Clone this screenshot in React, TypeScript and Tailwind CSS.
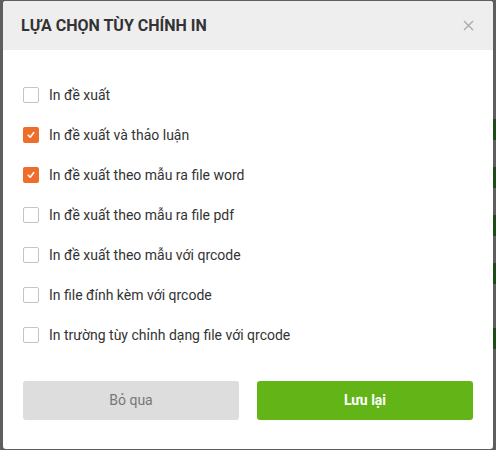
import { useState } from 'react'

const options = [
  { id: 'de-xuat', label: 'In đề xuất', checked: false },
  { id: 'thao-luan', label: 'In đề xuất và thảo luận', checked: true },
  { id: 'word', label: 'In đề xuất theo mẫu ra file word', checked: true },
  { id: 'pdf', label: 'In đề xuất theo mẫu ra file pdf', checked: false },
  { id: 'qrcode', label: 'In đề xuất theo mẫu với qrcode', checked: false },
  { id: 'dinh-kem', label: 'In file đính kèm với qrcode', checked: false },
  { id: 'tuy-chinh', label: 'In trường tùy chỉnh dạng file với qrcode', checked: false },
]

function CheckBox({ checked }: { checked: boolean }) {
  if (checked) {
    return (
      <span className="w-4 h-4 rounded-[2px] bg-[#ee6d2a] flex items-center justify-center shrink-0">
        <svg width="10" height="10" viewBox="0 0 10 10" fill="none">
          <path d="M2.2 5.2 L4.2 7.2 L7.8 2.6" stroke="#fff" strokeWidth="1.6" strokeLinecap="round" strokeLinejoin="round" />
        </svg>
      </span>
    )
  }
  return <span className="w-4 h-4 rounded-[2px] border border-[#c4c4c4] bg-white shrink-0" />
}

export default function App() {
  const [items, setItems] = useState(options)

  const toggle = (id: string) =>
    setItems(items.map((it) => (it.id === id ? { ...it, checked: !it.checked } : it)))

  return (
    <div className="w-[496px] h-[450px] bg-[#5e5e5e] flex overflow-hidden font-['Roboto',sans-serif]">
      <div className="w-[3px] shrink-0" />
      <div className="w-[490px] mt-[1px] h-[448px] bg-white rounded-[3px] overflow-hidden flex flex-col shrink-0">
        <div className="h-[49px] bg-[#eeeeee] flex items-center justify-between pl-[18px] pr-[19px]">
          <h2 className="text-[16px] font-bold text-[#333333] tracking-[0px]">LỰA CHỌN TÙY CHÍNH IN</h2>
          <button className="text-[#aaaaaa]">
            <svg width="11" height="11" viewBox="0 0 11 11">
              <path d="M1 1 L10 10 M10 1 L1 10" stroke="#aaaaaa" strokeWidth="1.4" />
            </svg>
          </button>
        </div>
        <div className="pt-[25px] px-[20px] flex flex-col">
          {items.map((it) => (
            <label
              key={it.id}
              onClick={() => toggle(it.id)}
              className="h-[40px] flex items-center gap-[10px] cursor-pointer"
            >
              <CheckBox checked={it.checked} />
              <span className="text-[14px] text-[#333333]">{it.label}</span>
            </label>
          ))}
        </div>
        <div className="px-[20px] mt-[26px] flex gap-[18px]">
          <button className="flex-1 h-[39px] rounded-[3px] bg-[#dddddd] text-[#777777] text-[14px]">
            Bỏ qua
          </button>
          <button className="flex-1 h-[39px] rounded-[3px] bg-[#63b517] text-white text-[14px] font-bold">
            Lưu lại
          </button>
        </div>
      </div>
      <div className="w-[3px] shrink-0 flex flex-col pt-[119px] gap-[27px]">
        <div className="h-[21px] bg-[#1f4a1a]" />
        <div className="h-[21px] bg-[#1f4a1a]" />
        <div className="h-[21px] bg-[#1f4a1a]" />
        <div className="h-[21px] bg-[#1f4a1a]" />
        <div className="h-[21px] mt-[17px] bg-[#1f4a1a]" />
      </div>
    </div>
  )
}
